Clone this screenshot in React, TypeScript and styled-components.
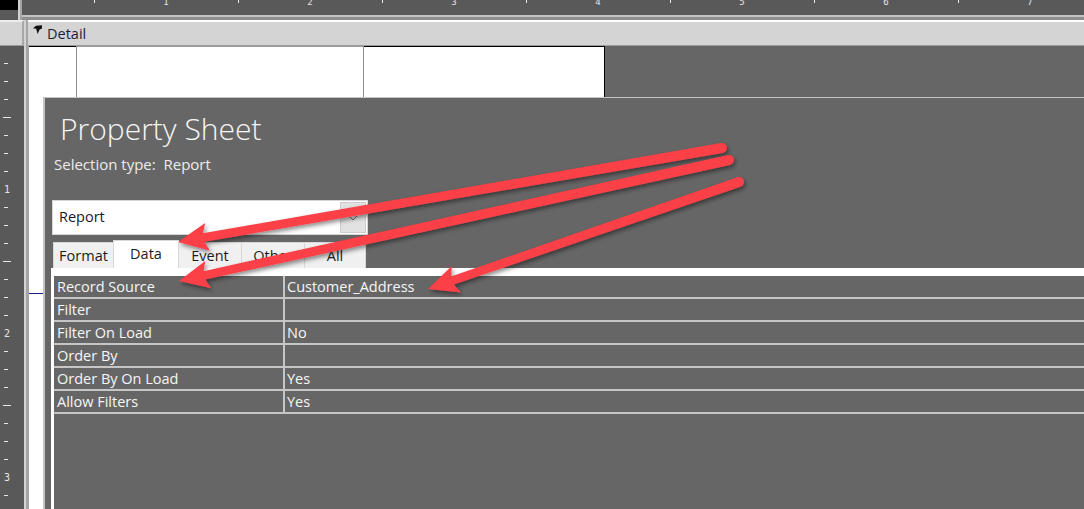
import React from 'react';
import styled, { createGlobalStyle } from 'styled-components';

const GlobalStyle = createGlobalStyle`
  html, body {
    margin: 0;
    padding: 0;
    background: #666666;
  }
  body {
    font-family: "Open Sans", "Noto Sans", sans-serif;
  }
`;

const Screen = styled.div`
  position: relative;
  width: 1084px;
  height: 509px;
  overflow: hidden;
  display: flex;
  flex-direction: column;
  background: #666666;
`;

/* ---------- top ruler ---------- */

const TopRow = styled.div`
  display: flex;
  height: 20px;
  flex-shrink: 0;
`;

const Corner = styled.div`
  width: 24px;
  background: #595959;
`;

const BlackSquare = styled.div`
  width: 18px;
  height: 10px;
  background: #000;
`;

const Separator = styled.div<{ $w: number }>`
  width: ${({ $w }) => $w}px;
  flex-shrink: 0;
  box-sizing: border-box;
  border-left: 2px solid #d2d2d2;
  background: #a4a4a4;
`;

const RulerWrap = styled.div`
  flex: 1;
  display: flex;
  flex-direction: column;
`;

const Ruler = styled.div`
  height: 15px;
  background: #595959;
  display: flex;
  padding-left: 36px;
  overflow: hidden;
`;

const RulerCell = styled.div`
  width: 72px;
  flex-shrink: 0;
  display: flex;
  justify-content: center;
`;

const RulerTick = styled.div`
  width: 1px;
  height: 3px;
  background: #e6e6e6;
`;

const RulerNum = styled.div`
  font-family: "DejaVu Sans Mono", monospace;
  font-size: 9px;
  line-height: 9px;
  margin-top: -2px;
  color: #e6e6e6;
`;

const RulerEdge = styled.div`
  height: 5px;
  box-sizing: border-box;
  border-top: 2px solid #c2c2c2;
  background: #8e8e8e;
`;

/* ---------- detail band ---------- */

const DetailRow = styled.div`
  display: flex;
  height: 26px;
  flex-shrink: 0;
`;

const LeftBox = styled.div`
  width: 24px;
  box-sizing: border-box;
  background: #d4d4d4;
  border-top: 2px solid #ececec;
  border-right: 2px solid #a8a8a8;
  border-bottom: 1px solid #9a9a9a;
`;

const DetailBar = styled.div`
  flex: 1;
  display: flex;
  align-items: flex-start;
  gap: 5px;
  box-sizing: border-box;
  background: #d4d4d4;
  border-top: 2px solid #ffffff;
  border-bottom: 1px solid #9a9a9a;
  padding-left: 5px;
`;

const DetailIcon = styled.svg`
  margin-top: 3px;
  flex-shrink: 0;
`;

const DetailLabel = styled.span`
  font-size: 14.5px;
  line-height: 23px;
  color: #1d1d3a;
`;

/* ---------- body ---------- */

const BodyRow = styled.div`
  flex: 1;
  display: flex;
  min-height: 0;
`;

const VRuler = styled.div`
  width: 24px;
  flex-shrink: 0;
  background: #595959;
  padding-top: 8px;
  box-sizing: border-box;
  display: flex;
  flex-direction: column;
  overflow: hidden;
`;

const VCell = styled.div`
  height: 18px;
  flex-shrink: 0;
  display: flex;
  align-items: center;
  padding-left: 4px;
`;

const VTick = styled.div<{ $long?: boolean }>`
  width: ${({ $long }) => ($long ? 8 : 4)}px;
  margin-left: ${({ $long }) => ($long ? -1 : 0)}px;
  height: 1px;
  background: #e6e6e6;
`;

const VNum = styled.div`
  font-family: "DejaVu Sans Mono", monospace;
  font-size: 10px;
  color: #e6e6e6;
`;

const Canvas = styled.div`
  flex: 1;
  display: flex;
  flex-direction: column;
  min-width: 0;
`;

const SectionBand = styled.div`
  height: 51px;
  flex-shrink: 0;
  display: flex;
`;

const DesignSurface = styled.div`
  width: 576px;
  box-sizing: border-box;
  background: #fff;
  border-top: 1px solid #000;
  border-right: 1px solid #000;
  padding-left: 47px;
  display: flex;
`;

const ControlBox = styled.div`
  width: 288px;
  box-sizing: border-box;
  margin-top: -1px;
  border-top: 1px solid #9c9c9c;
  border-left: 1px solid #8c8c8c;
  border-right: 1px solid #8c8c8c;
`;

const LowerArea = styled.div`
  flex: 1;
  display: flex;
  min-height: 0;
`;

const Gutter = styled.div`
  width: 14px;
  flex-shrink: 0;
  background: #fff;
  padding-top: 196px;
  box-sizing: border-box;
`;

const GuideLine = styled.div`
  height: 1px;
  background: #1c1c8e;
`;

/* ---------- property sheet ---------- */

const Panel = styled.div`
  flex: 1;
  min-width: 0;
  display: flex;
  flex-direction: column;
  background: #666666;
  border-top: 1px solid #c4c4c4;
  border-left: 2px solid #c4c4c4;
`;

const Title = styled.h1`
  margin: 13px 0 0 15px;
  font-size: 30px;
  line-height: 36px;
  font-weight: 300;
  color: #f6f6f6;
  white-space: nowrap;
`;

const Subtitle = styled.div`
  margin: 7px 0 0 9px;
  font-size: 15px;
  line-height: 20px;
  color: #ececec;
  white-space: nowrap;
`;

const Combo = styled.div`
  margin: 26px 0 0 7px;
  width: 316px;
  height: 35px;
  box-sizing: border-box;
  background: #fff;
  border: 1px solid #d6d6d6;
  display: flex;
  align-items: stretch;
  padding: 1px;
`;

const ComboText = styled.div`
  flex: 1;
  padding-left: 5px;
  font-size: 14.5px;
  line-height: 30px;
  color: #1a1a1a;
`;

const ComboButton = styled.div`
  width: 26px;
  box-sizing: border-box;
  background: #e2e2e2;
  border: 1px solid #cdcdcd;
  display: flex;
  align-items: center;
  justify-content: center;
`;

const TabStrip = styled.div`
  margin: 5px 0 0 9px;
  height: 28px;
  display: flex;
  align-items: flex-end;
  flex-shrink: 0;
`;

const Tab = styled.div<{ $active?: boolean; $w: number }>`
  width: ${({ $w }) => $w}px;
  height: ${({ $active }) => ($active ? 28 : 26)}px;
  box-sizing: border-box;
  border: 1px solid #d8d8d8;
  border-bottom: none;
  margin-left: -1px;
  background: ${({ $active }) => ($active ? '#ffffff' : '#f0f0f0')};
  text-align: center;
  font-size: 14.5px;
  line-height: 26px;
  color: #1c1c1c;
  position: relative;
  z-index: ${({ $active }) => ($active ? 1 : 0)};
`;

const TabPage = styled.div`
  flex: 1;
  margin-left: 6px;
  background: #fff;
  padding: 8px 0 0 3px;
  display: flex;
  flex-direction: column;
  min-width: 0;
`;

const Grid = styled.div`
  flex: 1;
  background: #666666;
  display: flex;
  flex-direction: column;
`;

const Row = styled.div`
  display: flex;
  height: 23px;
  flex-shrink: 0;
  box-sizing: border-box;
  border-bottom: 2px solid #c6c6c6;
`;

const Cell = styled.div<{ $label?: boolean }>`
  ${({ $label }) => ($label ? 'width: 231px; border-right: 2px solid #c6c6c6;' : 'flex: 1;')}
  box-sizing: border-box;
  padding-left: ${({ $label }) => ($label ? 3 : 2)}px;
  font-size: 14.5px;
  line-height: 21px;
  color: #f6f6f6;
  white-space: nowrap;
  overflow: hidden;
`;

/* ---------- arrows overlay ---------- */

const Overlay = styled.svg`
  position: absolute;
  left: 0;
  top: 0;
  pointer-events: none;
`;

type Pt = [number, number];

const arrowPoints = (tail: Pt, tip: Pt) => {
  const [tx, ty] = tail;
  const [px, py] = tip;
  const len = Math.hypot(px - tx, py - ty);
  const ux = (px - tx) / len;
  const uy = (py - ty) / len;
  const nx = -uy;
  const ny = ux;
  const hl = 30;
  const hw = 14;
  const wt = 5;
  const wn = 4.3;
  const bx = px - ux * hl;
  const by = py - uy * hl;
  const cx = px - ux * (hl - 4);
  const cy = py - uy * (hl - 4);
  const pts: Pt[] = [
    [tx + nx * wt, ty + ny * wt],
    [cx + nx * wn, cy + ny * wn],
    [bx + nx * hw, by + ny * hw],
    [px, py],
    [bx - nx * hw, by - ny * hw],
    [cx - nx * wn, cy - ny * wn],
    [tx - nx * wt, ty - ny * wt],
  ];
  return pts.map(([x, y]) => `${x.toFixed(1)},${y.toFixed(1)}`).join(' ');
};

const arrows: { tail: Pt; tip: Pt }[] = [
  { tail: [722, 148], tip: [178, 242] },
  { tail: [729, 160], tip: [179, 281] },
  { tail: [739, 182], tip: [428, 289] },
];

const properties = [
  { name: 'Record Source', value: 'Customer_Address' },
  { name: 'Filter', value: '' },
  { name: 'Filter On Load', value: 'No' },
  { name: 'Order By', value: '' },
  { name: 'Order By On Load', value: 'Yes' },
  { name: 'Allow Filters', value: 'Yes' },
];

const tabs = [
  { label: 'Format', w: 61 },
  { label: 'Data', w: 66, active: true },
  { label: 'Event', w: 64 },
  { label: 'Other', w: 64 },
  { label: 'All', w: 62 },
];

const App: React.FC = () => {
  const rulerCells = Array.from({ length: 15 }, (_, j) => j);
  const vCells = Array.from({ length: 26 }, (_, k) => k);

  return (
    <>
      <GlobalStyle />
      <Screen>
        <TopRow>
          <Corner>
            <BlackSquare />
          </Corner>
          <Separator $w={4} />
          <RulerWrap>
            <Ruler>
              {rulerCells.map((j) => (
                <RulerCell key={j}>
                  {j % 2 === 1 ? <RulerNum>{(j + 1) / 2}</RulerNum> : <RulerTick />}
                </RulerCell>
              ))}
            </Ruler>
            <RulerEdge />
          </RulerWrap>
        </TopRow>

        <DetailRow>
          <LeftBox />
          <Separator $w={4} />
          <DetailBar>
            <DetailIcon width="9" height="9" viewBox="0 0 9 9">
              <path d="M9 0.3 L3 0.8 L0 3.2 L3.2 3.8 L4.6 9 L6.6 4.6 L9 3.4 Z" fill="#111" />
            </DetailIcon>
            <DetailLabel>Detail</DetailLabel>
          </DetailBar>
        </DetailRow>

        <BodyRow>
          <VRuler>
            {vCells.map((k) => (
              <VCell key={k}>
                {k % 8 === 7 ? (
                  <VNum>{(k + 1) / 8}</VNum>
                ) : (
                  <VTick $long={k % 8 === 3} />
                )}
              </VCell>
            ))}
          </VRuler>
          <Separator $w={5} />
          <Canvas>
            <SectionBand>
              <DesignSurface>
                <ControlBox />
              </DesignSurface>
            </SectionBand>
            <LowerArea>
              <Gutter>
                <GuideLine />
              </Gutter>
              <Panel>
                <Title>Property Sheet</Title>
                <Subtitle>Selection type:&nbsp; Report</Subtitle>
                <Combo>
                  <ComboText>Report</ComboText>
                  <ComboButton>
                    <svg width="10" height="6" viewBox="0 0 10 6">
                      <path d="M1 1 L5 5 L9 1" fill="none" stroke="#6a6a6a" strokeWidth="1" />
                    </svg>
                  </ComboButton>
                </Combo>
                <TabStrip>
                  {tabs.map((t) => (
                    <Tab key={t.label} $w={t.w} $active={t.active}>
                      {t.label}
                    </Tab>
                  ))}
                </TabStrip>
                <TabPage>
                  <Grid>
                    {properties.map((p) => (
                      <Row key={p.name}>
                        <Cell $label>{p.name}</Cell>
                        <Cell>{p.value}</Cell>
                      </Row>
                    ))}
                  </Grid>
                </TabPage>
              </Panel>
            </LowerArea>
          </Canvas>
        </BodyRow>

        <Overlay width="1084" height="509" viewBox="0 0 1084 509">
          <defs>
            <filter id="arrowShadow" x="-10%" y="-30%" width="120%" height="160%">
              <feDropShadow dx="1.5" dy="2.5" stdDeviation="2" floodColor="#000" floodOpacity="0.45" />
            </filter>
          </defs>
          {arrows.map((a, i) => (
            <g key={i} filter="url(#arrowShadow)" fill="#fb3f46">
              <polygon points={arrowPoints(a.tail, a.tip)} />
              <circle cx={a.tail[0]} cy={a.tail[1]} r={5} />
            </g>
          ))}
        </Overlay>
      </Screen>
    </>
  );
};

export default App;
